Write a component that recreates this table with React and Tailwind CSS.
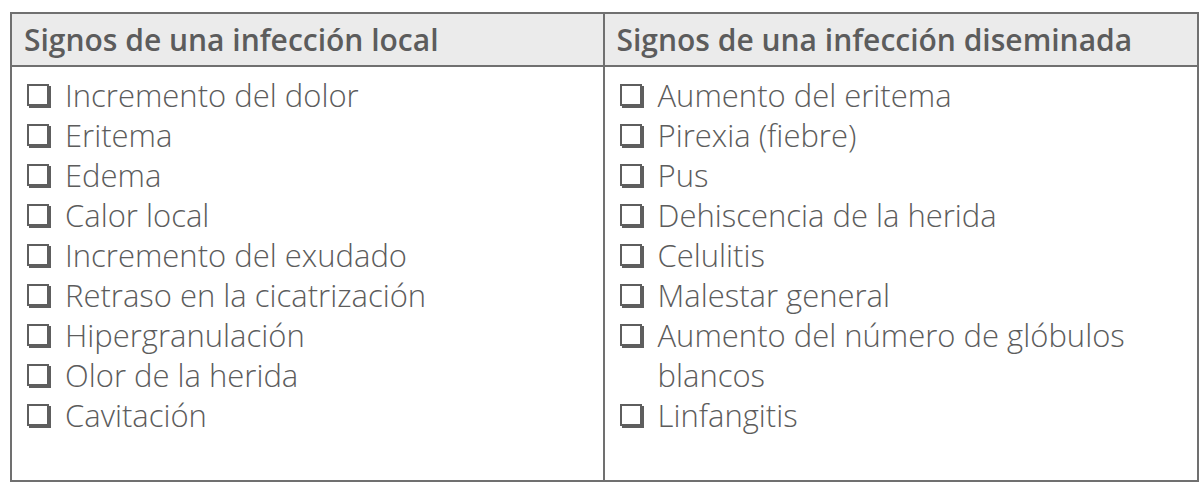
import React from "react";

const local = [
    "Incremento del dolor",
    "Eritema",
    "Edema",
    "Calor local",
    "Incremento del exudado",
    "Retraso en la cicatrización",
    "Hipergranulación",
    "Olor de la herida",
    "Cavitación",
];

const diseminada = [
    "Aumento del eritema",
    "Pirexia (fiebre)",
    "Pus",
    "Dehiscencia de la herida",
    "Celulitis",
    "Malestar general",
    "Aumento del número de glóbulos blancos",
    "Linfangitis",
];

const Box = () => (
    <span className="mt-[9px] mr-[16px] block h-[22px] w-[22px] shrink-0 border-2 border-[#5e5e5e] bg-white shadow-[2px_2px_0_#5e5e5e]" />
);

const Lista = ({ items }) => (
    <ul className="pt-[8px] pb-[45px] pl-[15px] pr-[20px]">
        {items.map((item) => (
            <li key={item} className="flex items-start text-[31px] font-light leading-[40px]">
                <Box />
                <span>{item}</span>
            </li>
        ))}
    </ul>
);

export default function App() {
    return (
        <div className="min-h-screen bg-white pt-[12px] pl-[10px] pr-[1px] font-['Open_Sans',sans-serif] text-[#5c5c5c]">
            <div className="grid grid-cols-2 border-2 border-[#707070]">
                <div className="border-r-2 border-b-2 border-[#707070] bg-[#ebebeb] px-[12px] py-[8px] text-[30px] font-semibold leading-[35px]">
                    Signos de una infección local
                </div>
                <div className="border-b-2 border-[#707070] bg-[#ebebeb] px-[12px] py-[8px] text-[30px] font-semibold leading-[35px]">
                    Signos de una infección diseminada
                </div>
                <div className="border-r-2 border-[#707070]">
                    <Lista items={local} />
                </div>
                <div>
                    <Lista items={diseminada} />
                </div>
            </div>
        </div>
    );
}
